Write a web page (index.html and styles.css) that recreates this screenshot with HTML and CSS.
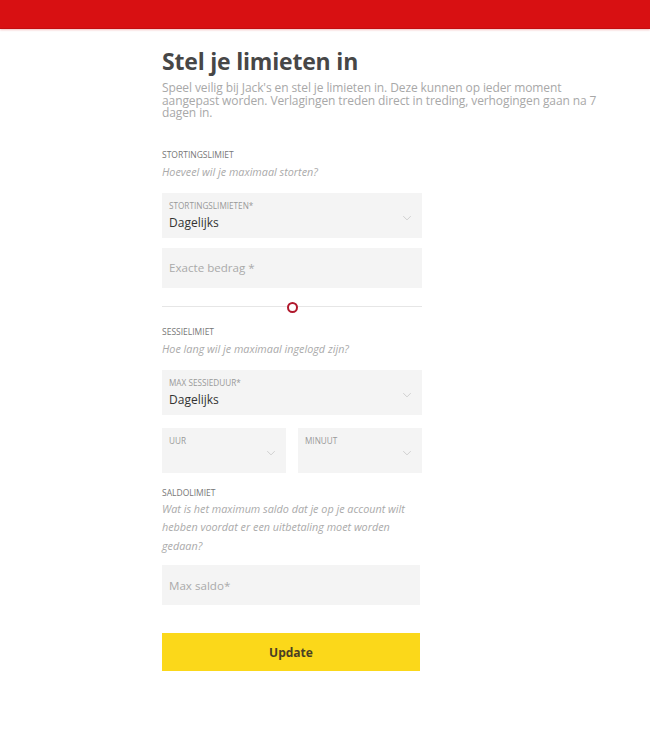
FILE: index.html
```html
<!DOCTYPE html>
<html lang="nl">
  <head>
    <meta charset="UTF-8" />
    <meta name="viewport" content="width=device-width, initial-scale=1.0" />
    <title>Stel je limieten in</title>
    <link rel="stylesheet" href="styles.css">
  </head>
  <body>
    <header class="topbar"></header>

    <div class="content">
      <h1>Stel je limieten in</h1>
      <p class="intro">
        Speel veilig bij Jack's en stel je limieten in. Deze kunnen op ieder moment
        aangepast worden. Verlagingen treden direct in treding, verhogingen gaan na 7
        dagen in.
      </p>

      <form class="limits" onsubmit="return false">
        <!-- Stortingslimiet -->
        <div class="section-title">Stortingslimiet</div>
        <div class="section-hint">Hoeveel wil je maximaal storten?</div>

        <div class="field select">
          <span class="field-label">Stortingslimieten*</span>
          <span class="field-value">Dagelijks</span>
          <svg class="chevron" viewBox="0 0 12 8"><path d="M1 1.5 6 6.5 11 1.5" /></svg>
        </div>

        <div class="field input">
          <span class="placeholder">Exacte bedrag *</span>
        </div>

        <div class="slider">
          <span class="slider-track"></span>
          <span class="slider-thumb"></span>
        </div>

        <!-- Sessielimiet -->
        <div class="section-title after-slider">Sessielimiet</div>
        <div class="section-hint">Hoe lang wil je maximaal ingelogd zijn?</div>

        <div class="field select">
          <span class="field-label">Max sessieduur*</span>
          <span class="field-value">Dagelijks</span>
          <svg class="chevron" viewBox="0 0 12 8"><path d="M1 1.5 6 6.5 11 1.5" /></svg>
        </div>

        <div class="field-row">
          <div class="field select small">
            <span class="field-label">Uur</span>
            <svg class="chevron" viewBox="0 0 12 8"><path d="M1 1.5 6 6.5 11 1.5" /></svg>
          </div>
          <div class="field select small">
            <span class="field-label">Minuut</span>
            <svg class="chevron" viewBox="0 0 12 8"><path d="M1 1.5 6 6.5 11 1.5" /></svg>
          </div>
        </div>

        <!-- Saldolimiet -->
        <div class="section-title after-row">Saldolimiet</div>
        <div class="section-hint long">
          Wat is het maximum saldo dat je op je account wilt hebben voordat er een
          uitbetaling moet worden gedaan?
        </div>

        <div class="field input saldo">
          <span class="placeholder">Max saldo*</span>
        </div>

        <button type="submit" class="update-button">Update</button>
      </form>
    </div>
  </body>
</html>
```

FILE: styles.css
```css
body {
  font-family: "Open Sans", "Noto Sans", sans-serif;
  margin: 0;
  background-color: #fff;
  color: #444;
}
.topbar {
  height: 28px;
  background-color: #d81012;
  border-bottom: 1px solid #c30d10;
  box-shadow: 0 1px 2px rgba(200, 0, 0, 0.25);
}
.content {
  padding-left: 162px;
  width: 440px;
}
h1 {
  font-size: 23px;
  font-weight: 700;
  color: #474747;
  margin: 16px 0 0;
  line-height: 32px;
  letter-spacing: -0.2px;
}
.intro {
  font-size: 12px;
  line-height: 12.5px;
  color: #a8a8a8;
  margin: 5px 0 0;
  letter-spacing: -0.1px;
}
.limits {
  width: 260px;
  display: flex;
  flex-direction: column;
}
.section-title {
  font-size: 8.5px;
  text-transform: uppercase;
  color: #777;
  margin-top: 29px;
  line-height: 12px;
}
.section-title.after-slider {
  margin-top: 10px;
}
.section-title.after-row {
  margin-top: 14px;
}
.section-hint {
  font-size: 10.8px;
  font-style: italic;
  color: #aaa;
  margin-top: 4px;
  line-height: 14px;
}
.section-hint.long {
  width: 252px;
  line-height: 18.5px;
  margin-top: 1px;
}
.field {
  position: relative;
  background-color: #f4f4f4;
  box-sizing: border-box;
  display: flex;
  flex-direction: column;
}
.field.select {
  height: 45px;
  margin-top: 14px;
  padding: 8px 7px 0;
}
.field.input {
  height: 40px;
  margin-top: 10px;
  padding: 0 7px;
  justify-content: center;
}
.field-label {
  font-size: 8.2px;
  text-transform: uppercase;
  color: #999;
  line-height: 10px;
}
.field-value {
  font-size: 12px;
  color: #333;
  line-height: 18px;
  margin-top: 3px;
}
.placeholder {
  font-size: 11.6px;
  color: #aaa;
}
.chevron {
  position: absolute;
  right: 10px;
  top: 22px;
  width: 10px;
  height: 6px;
  fill: none;
  stroke: #ccc;
  stroke-width: 1.2;
}
.field-row {
  display: flex;
  gap: 12px;
  margin-top: 13px;
}
.field-row .field {
  flex: 1;
  margin-top: 0;
}
.slider {
  position: relative;
  height: 18px;
  margin-top: 10px;
  display: flex;
  align-items: center;
}
.slider-track {
  flex: 1;
  height: 1px;
  background-color: #e6e6e6;
}
.slider-thumb {
  position: absolute;
  left: 125px;
  top: 4px;
  width: 7px;
  height: 7px;
  border: 2px solid #b0182c;
  border-radius: 50%;
  background-color: #fff;
}
.saldo {
  width: 258px;
  margin-top: 12px;
}
.update-button {
  width: 258px;
  height: 38px;
  margin-top: 28px;
  background-color: #fbd81a;
  border: none;
  font-family: inherit;
  font-size: 12px;
  font-weight: 700;
  color: #4a4024;
  cursor: pointer;
}
```
